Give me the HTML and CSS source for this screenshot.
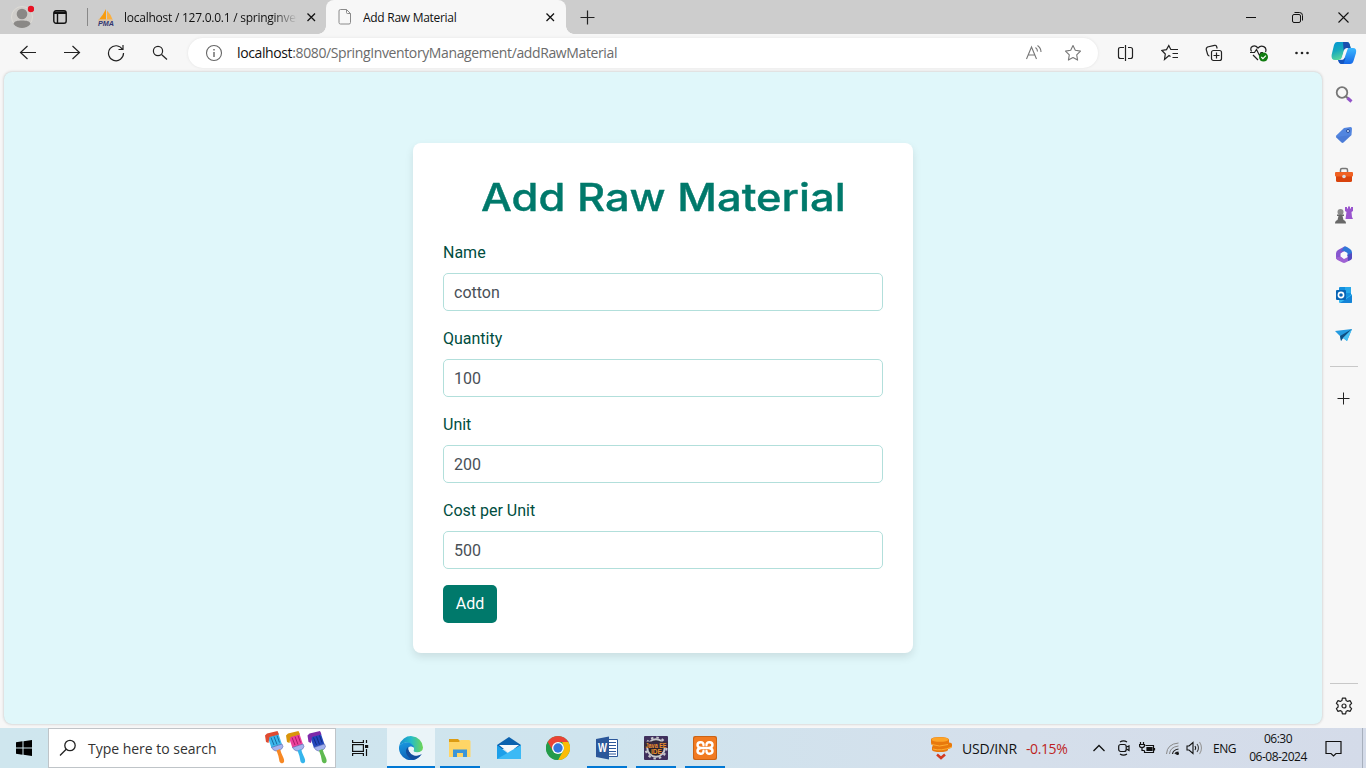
FILE: index.html
```html
<!DOCTYPE html>
<html lang="en">
<head>
<meta charset="utf-8">
<title>Add Raw Material</title>
<link rel="stylesheet" href="styles.css">
</head>
<body>
<div class="window">
  <header class="tabs">
    <div class="avatar"><svg width="24" height="30" viewBox="0 0 24 30"><circle cx="12" cy="17" r="10.500" fill="#cfcdca" stroke="#dddbd6"/><circle cx="12" cy="14" r="5.300" fill="#8a8886"/><path d="M3.500 24c.5-3 4-3.500 8.500-3.500s8 .5 8.500 3.500a11 11 0 0 1-17 0z" fill="#8a8886"/><circle cx="21" cy="9" r="3.200" fill="#e81123"/></svg></div>
    <div class="workspace"><svg width="14" height="14" viewBox="0 0 14 14" fill="none" stroke="#111" stroke-width="1.400"><rect x=".8" y=".8" width="12.400" height="12.400" rx="2.200"/><path d="M1 3.300h12M4.500 4v9"/><path d="M1 2.500h12" stroke-width="2"/></svg></div>
    <div class="tab idle">
      <svg width="18" height="18" viewBox="0 0 18 18"><path d="M9 1v10.500H2Q6 7 9 1z" fill="#f89c0e"/><path d="M10 2.500q4 4 5.500 9H10z" fill="#fbb040"/><path d="M1 12h15" stroke="#e8b87a"/><text x="1" y="17.500" class="pma" textLength="16" lengthAdjust="spacingAndGlyphs">PMA</text></svg>
      <span class="tab-title faded">localhost / 127.0.0.1 / springinver</span>
      <svg class="close" width="10" height="10" viewBox="0 0 10 10"><path d="M1.500 1.500l7.500 7.500M9 1.500L1.500 9" stroke="#111" stroke-width="1.300"/></svg>
    </div>
    <div class="tab active">
      <svg width="14" height="18" viewBox="0 0 14 18" fill="none" stroke="#8a8a8a"><path d="M2.500 1.500h6l4 4v9q0 1.500-1.500 1.500h-8.500q-1.500 0-1.500-1.500v-11.500q0-1.500 1.500-1.500zM8.500 1.500v3q0 1 1 1h3"/></svg>
      <span class="tab-title">Add Raw Material</span>
      <svg class="close" width="10" height="10" viewBox="0 0 10 10"><path d="M1.500 1.500l7.500 7.500M9 1.500L1.500 9" stroke="#111" stroke-width="1.300"/></svg>
    </div>
    <div class="new-tab"><svg width="15" height="15" viewBox="0 0 15 15"><path d="M7.500 0.500v14M.5 7.500h14" stroke="#222" stroke-width="1.200"/></svg></div>
    <div class="controls">
      <span><svg width="10" height="10" viewBox="0 0 10 10"><path d="M0 5.500h10" stroke="#111"/></svg></span>
      <span><svg width="11" height="11" viewBox="0 0 11 11" fill="none" stroke="#111"><rect x=".5" y="2.500" width="8" height="8" rx="1.500"/><path d="M2.500 .5h5q3 0 3 3v5"/></svg></span>
      <span><svg width="11" height="11" viewBox="0 0 11 11"><path d="M.5 .5l10 10M10.500 .5l-10 10" stroke="#111" stroke-width="1.100"/></svg></span>
    </div>
  </header>

  <nav class="toolbar">
    <div class="nav-buttons">
      <span><svg width="18" height="18" viewBox="0 0 18 18"><path d="M17 8.500H1.500M8.500 2L1.500 8.500l7 6.500"/></svg></span>
      <span><svg width="18" height="18" viewBox="0 0 18 18"><path d="M1 8.500h15.500M9.500 2l7 6.500-7 6.500"/></svg></span>
      <span><svg width="18" height="18" viewBox="0 0 18 18"><path d="M15.500 5.500A7.500 7.500 0 1 0 16.500 9M16 1v4.500h-4.500"/></svg></span>
      <span><svg width="18" height="18" viewBox="0 0 18 18"><circle cx="7" cy="7" r="4.600"/><path d="M10.500 10.500L16 15.500"/></svg></span>
    </div>
    <div class="omnibox">
      <svg width="18" height="18" viewBox="0 0 18 18" fill="none" stroke="#666"><circle cx="9" cy="9" r="7.500" stroke-width="1.100"/><path d="M9 8v5M9 5v1.500" stroke-width="1.400"/></svg>
      <span class="url"><b>localhost</b>:8080/SpringInventoryManagement/addRawMaterial</span>
      <svg class="read" width="18" height="18" viewBox="0 0 18 18" fill="none" stroke="#777" stroke-width="1.100"><path d="M1.500 15L6.500 3l5 12M3.200 11h6.600M10.500 3.500q2 1.500 2 4M12.500 1.500q3.500 2.500 3.500 6.500"/></svg>
      <svg width="18" height="18" viewBox="0 0 18 18" fill="none" stroke="#777" stroke-width="1.100"><path d="M9 1.500l2.300 4.800 5.200.8-3.800 3.700.9 5.300L9 13.600l-4.600 2.500.9-5.300L1.500 7.100l5.200-.8z" stroke-linejoin="round"/></svg>
    </div>
    <div class="nav-buttons actions">
      <span><svg width="18" height="18" viewBox="0 0 18 18"><path d="M6 3.500H3.500Q1.500 3.500 1.500 5.500v7q0 2 2 2H6M11 3.500h2.500q2 0 2 2v7q0 2-2 2H11M8.500 1v16M5.500 3.500h1.500M5.500 14.500h1.500"/></svg></span>
      <span><svg width="18" height="18" viewBox="0 0 18 18"><path d="M9.500 12.500l-1.500-1-4.500 4 .8-5.500L.9 6.500l4.600-.9L7.800 1.500l2 4H17M11.500 9.500H17M11.500 13.500H17"/></svg></span>
      <span><svg width="18" height="18" viewBox="0 0 18 18"><rect x="6.500" y="6.500" width="10" height="10" rx="2"/><path d="M11.500 8.500v6M8.500 11.500h6M4.500 12Q3 12 2.500 10L1.200 5.500Q1 4 2.500 3L9.500 1.300q1.500-.3 2 1l.7 2.200"/></svg></span>
      <span class="health"><svg width="20" height="18" viewBox="0 0 20 18"><path d="M2.500 7.500C0 2.500 5.500 0 9 4c3.500-4 9.500-1 7.500 4M1 8.500h4.500l2-3 3 6 1.500-3h2M4 11l5 5"/><circle cx="14.500" cy="13" r="4.500" fill="#107c10" stroke="none"/><path d="M12.300 13l1.600 1.600 3-3" stroke="#fff"/></svg></span>
      <span><svg width="16" height="18" viewBox="0 0 16 18"><g fill="#222" stroke="none"><circle cx="2.500" cy="9" r="1.300"/><circle cx="8" cy="9" r="1.300"/><circle cx="13.500" cy="9" r="1.300"/></g></svg></span>
      <span class="copilot"><svg width="26" height="24" viewBox="0 0 26 24"><defs><linearGradient id="ca" x1="0" y1="0" x2=".4" y2="1"><stop offset="0" stop-color="#0094d4"/><stop offset=".5" stop-color="#16a9bd"/><stop offset="1" stop-color="#5bd99a"/></linearGradient><linearGradient id="cb" x1="0" y1="0" x2="0" y2="1"><stop offset="0" stop-color="#3bb8ff"/><stop offset="1" stop-color="#1668e8"/></linearGradient></defs><path d="M6 1h10q2 0 2.600 2l1 4h-4q-2 0-2.600 2l-2 7q-.8 3-3 3H4q-4 0-3.400-5L3 4Q3.800 1 6 1z" fill="url(#ca)"/><path d="M12 1h4q2 0 2.600 2l1.400 5h-5q-1.600 0-2.400 1.600z" fill="#1a4fae"/><path d="M20 7h2q4 0 3 5l-2.500 8q-.8 3-3.500 3h-8q-2.600 0-3.500-4H9q1.800 0 2.500-2L14 9q.6-2 2.600-2z" fill="url(#cb)"/><path d="M7 19q.9 4 3.500 4h2l2-6-3-.3Q10.800 19 9 19z" fill="#1455c0"/><path d="M13.500 8.500q.7-1.500 2.500-1.500h1l-3.500 10q-1 2-3 2H9q1.500 0 2-2z" fill="#f7f7f7"/></svg></span>
    </div>
  </nav>

  <div class="body">
    <main class="page">
      <form class="card">
        <h1><span>Add Raw Material</span></h1>
        <label for="name">Name</label><input id="name" value="cotton">
        <label for="quantity">Quantity</label><input id="quantity" value="100">
        <label for="unit">Unit</label><input id="unit" value="200">
        <label for="cost">Cost per Unit</label><input id="cost" value="500">
        <button type="button">Add</button>
      </form>
    </main>
    <aside class="sidebar">
      <span><svg width="18" height="18" viewBox="0 0 18 18" fill="none"><circle cx="7" cy="6.500" r="5.300" stroke="#777" stroke-width="1.800"/><path d="M10.800 10.300l2 2" stroke="#777" stroke-width="2"/><path d="M12.500 12l4 3.500" stroke="#9254c8" stroke-width="3"/></svg></span>
      <span><svg width="18" height="18" viewBox="0 0 18 18"><path d="M9 2l6.500-1q1.500 0 1.500 1.500L16.500 9 8.500 16.500q-1 .8-2 0L1.300 11.500q-.8-1 0-2z" fill="#5285df"/><path d="M1 11l6 5.500q.7.200 1.500-.5L16.500 9" fill="#3a68c5" opacity=".3"/><circle cx="13" cy="5" r="1.500" fill="#d8e7ff" stroke="#244b9b"/></svg></span>
      <span><svg width="18" height="16" viewBox="0 0 18 16"><path d="M5.500 5V3q0-1.500 1.500-1.500h4q1.500 0 1.500 1.500v2" fill="none" stroke="#777" stroke-width="1.500"/><rect x="1" y="5" width="16" height="10" rx="1.500" fill="#d8430d"/><rect x="0" y="5" width="18" height="4.500" rx="1" fill="#f06123"/><circle cx="9" cy="9.500" r="1.800" fill="#d7dce0"/></svg></span>
      <span><svg width="18" height="18" viewBox="0 0 18 18"><path d="M10 1h2v1.500h1V.5h2v2h1V1h2v4l-1.500 1 .5 5 1 2h-7.500l1-7L10 5z" fill="#9a55ce"/><circle cx="5.500" cy="6" r="3" fill="#8b8b8b"/><path d="M2 8.500h7V10H7.500l1 4q2.500.5 2.500 3.500H0Q0 14.500 2.500 14l1-4H2z" fill="#686868"/></svg></span>
      <span><svg width="18" height="18" viewBox="0 0 18 18"><path d="M9 .7L3 4Q1 5 1 7.500v5L5.500 15V7.500L12 4V1.500Q10.500 0 9 .7z" fill="#8757cf"/><path d="M9 .7q1.500-.6 3 .3L15 3q2 1.200 2 3.500V12l-4.500-2V7L8 4.500 6 5.500z" fill="#2f78d8"/><path d="M1 11.500l5-1 3 2.500 4-2 4-4v4.500q0 1.500-1.500 2.500l-5 2.500q-1.500.9-3 0L2.500 14Q1 13 1 11.500z" fill="#9f62d4"/><path d="M12.500 9L17 7v4.500q0 1.500-1.500 2.500L13 15z" fill="#534ac0"/><path d="M6 7.200l3-1.700 3 1.700v3.600l-3 1.700-3-1.700z" fill="#fafafa"/></svg></span>
      <span><svg width="18" height="18" viewBox="0 0 18 18"><rect x="4" y="1" width="12" height="11" rx="1" fill="#1490df"/><path d="M10 1h6v6h-6z" fill="#28a8ea"/><path d="M4 9l6 4 7-5v8q0 1-1 1H5q-1 0-1-1z" fill="#35b8f1"/><path d="M5 17l12-8v7q0 1-1 1z" fill="#1483d6"/><rect x="1" y="4" width="10" height="10" rx="1" fill="#0864b5"/><circle cx="6" cy="9" r="2.600" fill="none" stroke="#fff" stroke-width="1.600"/></svg></span>
      <span><svg width="18" height="16" viewBox="0 0 18 16"><path d="M0 4l17-2-5 12-4-3-2 3-1-5z" fill="#259be0"/><path d="M17 2L5 9l1 5 2-3z" fill="#105083"/><path d="M17 2l-9 9 4 3z" fill="#48c0f3"/></svg></span>
      <hr>
      <span class="add"><svg width="13" height="13" viewBox="0 0 13 13"><path d="M6.500 .5v12M.5 6.500h12" stroke="#222"/></svg></span>
      <hr class="low">
      <span class="gear"><svg width="18" height="18" viewBox="0 0 18 18" fill="none" stroke="#222" stroke-width="1.200"><path d="M7.400 1.200h3.200l.5 2.300 1.600.9 2.300-.8 1.600 2.700L14.900 8v2l1.700 1.700-1.600 2.700-2.300-.8-1.600.9-.5 2.300H7.400l-.5-2.300-1.600-.9-2.300.8-1.600-2.700L3.100 10V8L1.400 6.300 3 3.600l2.300.8 1.600-.9z" stroke-linejoin="round"/><circle cx="9" cy="9" r="2"/></svg></span>
    </aside>
  </div>

  <footer class="taskbar">
    <div class="start"><svg width="16" height="16" viewBox="0 0 16 16"><path d="M0 2.200L6.500 1.300v6.200H0zM7.500 1.200L16 0v7.500H7.500zM0 8.500h6.500v6.200L0 13.800zM7.500 8.500H16V16l-8.500-1.200z"/></svg></div>
    <div class="search">
      <svg width="18" height="18" viewBox="0 0 18 18" fill="none" stroke="#222" stroke-width="1.300"><circle cx="11" cy="6.500" r="5.200"/><path d="M7.200 10.200L1 16.500"/></svg>
      <span>Type here to search</span>
      <svg class="brushes" width="64" height="34" viewBox="0 0 64 34">
        <defs>
          <path id="hair" d="M2 4l11-2.500 4 12L6.500 17z"/>
          <path id="band" d="M6.500 16.500L17 13l1 2.500q-1 3-3.500 4l-3.500.5q-3-.5-4.500-3.500z" fill="#a3b1ee" stroke="#5767ae" stroke-width=".6"/>
          <path id="drip" d="M0 4.500l2-2L12.500 0 14 3.500 4.500 6l-1 6-2.500-1z"/>
          <path id="grip" d="M11.500 19.500l3.500-1.500q1 4 3.500 9 1.500 4-.5 5-2.500 1-3.500-1.500-.5-5-3-11z"/>
          <path id="streak" d="M6 6.500l3 7.500M9 5.500l3 8M12 4.500l2.500 7"/>
        </defs>
        <g><use href="#hair" fill="#3cb7ec"/><use href="#band"/><use href="#drip" fill="#df4b31"/><use href="#grip" fill="#f78824"/><use href="#streak" stroke="#176c9e"/></g>
        <g transform="translate(21 0)"><use href="#hair" fill="#ed419c"/><use href="#band"/><use href="#drip" fill="#d9950b"/><use href="#grip" fill="#35b5ec"/><use href="#streak" stroke="#a81969"/></g>
        <g transform="translate(42.500 0)"><use href="#hair" fill="#2347bd"/><use href="#band"/><use href="#drip" fill="#7e2aaa"/><use href="#grip" fill="#5fb950"/><use href="#streak" stroke="#122d83"/></g>
      </svg>
    </div>
    <div class="taskview"><svg width="17" height="16" viewBox="0 0 17 16" fill="none" stroke="#111" stroke-width="1.200"><path d="M.6 0v2.500h10.800V0M.6 16v-2.500h10.800V16M14.500 0v3M14.500 9v7"/><rect x=".6" y="4.600" width="10.800" height="6.800"/><path d="M13 5h3.200v3H13z" fill="#111" stroke="none"/></svg></div>
    <div class="apps">
      <span class="current"><svg width="24" height="24" viewBox="0 0 24 24"><defs><linearGradient id="ea"><stop offset="0" stop-color="#168bd0"/><stop offset=".5" stop-color="#25bcc8"/><stop offset="1" stop-color="#70d653"/></linearGradient><linearGradient id="eb" x1="0" y1="0" x2=".4" y2="1"><stop offset="0" stop-color="#1a9be2"/><stop offset="1" stop-color="#0c5fb5"/></linearGradient></defs><path d="M.3 9.500A12 12 0 0 1 24 11.500q-.3 4.700-6 4.700-4.500 0-3.400-2.200Q16 12 13 9 7 4 .3 9.500z" fill="url(#ea)"/><path d="M.3 9.500Q6 4 12 7.500q3 2 3 4.500-1.500-2-4-1.500-3 1-2.500 4.500 1 4.500 5.500 5.500 4.500.8 8.500-2.500A12 12 0 0 1 .3 9.500z" fill="url(#eb)"/><path d="M9 11q-3.500 3-1 8 2 3.500 6 4.800 5.500-.6 8.700-5.800-4 2-8 .5-4.500-2-5.200-5z" fill="#114d9c"/><path d="M11.500 11q-2.500 1-1.500 4 1.500 3.500 5 4.500 4 1 7.500-1.500.8-1-.3-.7-3 1-5.700 0-3-1.300-1.700-3.500.7-2-1-2.800-1-.5-2.300 0z" fill="#eaf4f8"/></svg></span>
      <span class="open"><svg width="22" height="20" viewBox="0 0 22 20"><path d="M0 1h9l2 2h9v3H0z" fill="#dc9c13"/><path d="M0 4h10l1.500-2H20q1.500 0 1.500 1.500V19H0z" fill="#ffd566"/><path d="M4 19v-7.500h14V19h-4v-4H8v4z" fill="#3b96d8"/></svg></span>
      <span><svg width="24" height="24" viewBox="0 0 24 24"><path d="M0 9L12 1l12 8v4H0z" fill="#0b61ae"/><path d="M2 9h20L12 17z" fill="#f6f8fb"/><path d="M0 9l18 14H0z" fill="#1c9fe9"/><path d="M0 23l24-14v14z" fill="#3cb9f5"/></svg></span>
      <span><svg width="24" height="24" viewBox="0 0 24 24"><circle cx="12" cy="12" r="12" fill="#34a853"/><path d="M12 0a12 12 0 0 1 10.400 6H12L6.800 15 1.600 6A12 12 0 0 1 12 0z" fill="#ea4335"/><path d="M22.400 6A12 12 0 0 1 12 24l5.200-9a6 6 0 0 0 0-6l-1-3z" fill="#fbbc05"/><path d="M1.600 6l5.200 9q2 3 5.200 3h3l-3 6A12 12 0 0 1 1.600 6z" fill="#249b4a"/><circle cx="12" cy="12" r="6" fill="#fff"/><circle cx="12" cy="12" r="4.700" fill="#3376dd"/></svg></span>
      <span class="open"><svg width="24" height="24" viewBox="0 0 24 24"><path d="M12 3.500h10.500v17H12z" fill="#fff" stroke="#2b579a"/><path d="M14 6.500h7M14 9.500h7M14 12.500h7M14 15.500h7M14 18h7" stroke="#2b579a"/><path d="M1 3l13-2.500v23L1 21z" fill="#2b579a"/><text x="3" y="16" class="word" textLength="9" lengthAdjust="spacingAndGlyphs">W</text></svg></span>
      <span class="open"><svg width="24" height="24" viewBox="0 0 24 24"><rect width="24" height="24" rx="1" fill="#40305d"/><circle cx="12" cy="12" r="8.700" fill="#272330" stroke="#c7c7cc" stroke-width="2"/><circle cx="12" cy="12" r="10.500" fill="none" stroke="#c7c7cc" stroke-width="2" stroke-dasharray="2.500 3"/><path d="M0 5.500h24V12H0z" fill="#382b41"/><text x="1.500" y="11.500" class="ide" textLength="21" lengthAdjust="spacingAndGlyphs">Java EE</text><text x="7" y="18" class="ide" textLength="11" lengthAdjust="spacingAndGlyphs">IDE</text></svg></span>
      <span class="open"><svg width="24" height="24" viewBox="0 0 24 24"><rect width="24" height="24" rx="2" fill="#cb6315"/><rect x="1" y="1" width="22" height="22" rx="2" fill="#f17a21"/><path d="M8 12h8M8 12Q4.500 11.500 4.500 9T7.500 6.300 10.500 9M8 12q-3.500.5-3.500 3t3 2.700 3-2.700M16 12q3.500-.5 3.500-3t-3-2.700T13.500 9M16 12q3.500.5 3.500 3t-3 2.700-3-2.700" fill="none" stroke="#fff" stroke-width="2.400" stroke-linejoin="round" stroke-linecap="round"/></svg></span>
    </div>
    <div class="tray">
      <svg class="coins" width="23" height="24" viewBox="0 0 23 24"><path d="M1 3q1-2 9-2t9 2.500v3q3 0 3 2v2q-1 2-4 2.500v1q-1 2-8 2t-8-2v-3l1-1.500Q1 9 1 7z" fill="#e8790c"/><ellipse cx="10" cy="3.500" rx="8.500" ry="2.300" fill="#fda427"/><path d="M2 8.500q7 3 16 0M3 13q8 2.500 19-2" stroke="#ffad32" fill="none"/><path d="M7 18.500l4 3.500 4-3.500" stroke="#d33a20" stroke-width="2.500" fill="none"/></svg>
      <span class="pair">USD/INR</span><span class="change">-0.15%</span>
      <svg class="chevron" width="12" height="8" viewBox="0 0 12 8" fill="none" stroke="#111" stroke-width="1.300"><path d="M.5 7L6 1.500 11.500 7"/></svg>
      <svg class="meet" width="12" height="18" viewBox="0 0 12 18" fill="none" stroke="#111" stroke-width="1.200"><rect x=".7" y="5.500" width="7.500" height="7" rx="2"/><path d="M8.500 8l2.500-1v4.500L8.500 10M2 3Q5.500.800 9 3M2 15q3.500 2.200 7 0"/></svg>
      <svg class="battery" width="17" height="14" viewBox="0 0 17 14" fill="none" stroke="#111" stroke-width="1.200"><path d="M6.500 4.500h8v7h-9v-2"/><path d="M8 6.500h5v3H8z" fill="#111"/><path d="M15.500 7v2.500M1.500 1v2M4.500 1v2M.5 3.500h5v1q0 2-2.500 2t-2.500-2zM3 6.500v3h2.500"/></svg>
      <svg class="wifi" width="13" height="13" viewBox="0 0 13 13" fill="none" stroke="#888"><path d="M.5 12Q1 2 12.500 1M3.500 12Q4 5 12.500 4"/><path d="M6.500 12Q7 8 12.500 7M9 12q.5-2 3.500-2" stroke="#222" stroke-width="1.200"/><circle cx="11.500" cy="11.500" r="1.500" fill="#111" stroke="none"/></svg>
      <svg class="volume" width="18" height="14" viewBox="0 0 18 14" fill="none" stroke="#111" stroke-width="1.100"><path d="M1 5h2l4-3.500v11L3 9H1z"/><path d="M9 5q1.500 2 0 4"/><path d="M11 3q3 4 0 8" stroke="#444"/><path d="M13.500 1q4 6 0 12" stroke="#999"/></svg>
      <span class="lang">ENG</span>
      <div class="clock"><span>06:30</span><span>06-08-2024</span></div>
      <svg class="note" width="18" height="17" viewBox="0 0 18 17" fill="none" stroke="#111" stroke-width="1.200"><path d="M1 1.500h15v12h-5l-2.500 2.500L6 13.500H1z"/></svg>
      <i class="peek"></i>
    </div>
  </footer>
</div>
</body>
</html>
```

FILE: styles.css
```css
* { box-sizing: border-box; }
body { margin: 0; overflow: hidden; font-family: "Open Sans", "Noto Sans", sans-serif; color: #111; }
svg { display: block; flex: none; }
.window { width: 1366px; height: 768px; display: flex; flex-direction: column; background: #f7f7f7; }

.tabs { height: 34px; flex: none; display: flex; background: #cdcdcd; font-size: 12px; }
.avatar { width: 41px; padding-left: 10px; }
.workspace { width: 47px; border-right: 1px solid #888; height: 18px; margin-top: 8px; padding: 2px 0 0 12px; }
.tab { display: flex; align-items: center; white-space: nowrap; }
.tab.idle { width: 238px; padding-left: 9px; background: radial-gradient(circle at 0 0, #cdcdcd 7.5px, #f7f7f7 8px) 230px 26px / 8px 8px no-repeat; }
.tab-title { flex: none; overflow: hidden; letter-spacing: -0.28px; }
.idle .tab-title { width: 173px; margin-left: 9px; letter-spacing: -0.25px; }
.faded { -webkit-mask-image: linear-gradient(to right, #000 86%, transparent); mask-image: linear-gradient(to right, #000 86%, transparent); }
.idle .close { margin-left: 9px; }
.tab.active { width: 240px; padding-left: 12px; background: #f7f7f7; border-radius: 8px 8px 0 0; }
.active .tab-title { margin-left: 11px; width: 182px; }
.pma { font: italic bold 6.5px "Liberation Sans", sans-serif; fill: #34356f; }
.new-tab { width: 43px; display: grid; place-items: center; background: radial-gradient(circle at 8px 0, #cdcdcd 7.5px, #f7f7f7 8px) 0 26px / 8px 8px no-repeat; }
.controls { margin-left: auto; display: flex; }
.controls span { width: 46px; display: grid; place-items: center; }

.toolbar { height: 37px; flex: none; display: flex; align-items: center; padding-left: 6px; }
.nav-buttons { display: flex; width: 182px; }
.nav-buttons span { width: 44px; height: 37px; display: grid; place-items: center; }
.nav-buttons svg { fill: none; stroke: #222; stroke-width: 1.2; }
.omnibox { width: 910px; height: 30px; background: #fff; border-radius: 15px; box-shadow: 0 0 3px #e2e2e2; display: flex; align-items: center; padding: 0 16px 0 17px; }
.url { margin-left: 14px; font-size: 14px; color: #6b6b6b; letter-spacing: -0.38px; white-space: nowrap; }
.url b { color: #111; font-weight: 400; }
.read { margin: 0 21px 0 auto; }
.actions { margin-left: 6px; width: auto; }
.actions .health { padding-left: 2px; }
.actions .copilot { width: 40px; }
.copilot svg { stroke: none; }

.body { flex: 1; display: flex; padding-left: 4px; }
.page { width: 1318px; height: 652px; margin-top: 1px; background: #e0f7fa; border-radius: 8px; box-shadow: 0 0 3px #bbb; padding-top: 71px; }
.card { width: 500px; height: 510px; margin: 0 auto; padding: 30px; background: #fff; border-radius: 8px; box-shadow: 0 4px 8px rgba(0, 0, 0, .1); font: 16px/24px Roboto, sans-serif; }
h1 { margin: 0 0 20px; height: 48px; font: 500 38.5px/48px Inter, sans-serif; color: #00796b; text-align: center; white-space: nowrap; }
h1 span { display: inline-block; transform: scaleX(1.13); -webkit-text-stroke: 0.4px #00796b; }
label { display: block; color: #004d40; margin-bottom: 8px; }
input { display: block; width: 440px; height: 38px; margin-bottom: 16px; border: 1px solid #b2dfdb; border-radius: 5px; padding: 0 10px; font: 16px Roboto, sans-serif; color: #495057; background: #fff; }
button { display: block; width: 54px; height: 38px; border: 0; border-radius: 5px; background: #00796b; color: #fff; font: 16px Roboto, sans-serif; padding: 0 0 1px; }

.sidebar { width: 44px; display: flex; flex-direction: column; align-items: center; padding-top: 3px; }
.sidebar span { height: 40px; flex: none; display: grid; place-items: center; padding-top: 1px; }
hr { width: 28px; height: 1px; border: 0; margin: 12px 0; background: #c8c8c8; flex: none; }
.sidebar .add { height: 39px; padding: 0 1px 0 0; }
.sidebar .low { margin: auto 0 2px; }
.sidebar .gear { height: 42px; padding-bottom: 4px; }

.taskbar { height: 40px; flex: none; display: flex; background: linear-gradient(90deg, #cfe6ee 0%, #cfe4ee 45%, #d5dfeb 75%, #d4dbe9 100%); }
.start { width: 48px; display: grid; place-items: center; }
.search { width: 288px; background: #fff; border: 1px solid #bfc4c8; display: flex; align-items: center; padding-left: 10px; font-size: 14px; color: #333; white-space: nowrap; }
.search span { margin-left: 11px; width: 177px; letter-spacing: -0.02px; }
.taskview { width: 51px; padding-left: 16px; display: flex; align-items: center; }
.apps { display: flex; }
.apps span { width: 49px; height: 40px; display: grid; place-items: center; padding-right: 1px; }
.current { background: linear-gradient(#0078d4, #0078d4) 0 38px / 48px 2px no-repeat, linear-gradient(#eaf4f8, #eaf4f8) 0 0 / 48px 38px no-repeat; }
.open { background: linear-gradient(#0078d4, #0078d4) 4px 38px / 40px 2px no-repeat; }
.word { font: bold 12px "Liberation Sans", sans-serif; fill: #fff; }
.ide { font: bold 6.5px "Liberation Sans", sans-serif; fill: #ef922d; }
.tray { margin-left: auto; width: 436px; display: flex; align-items: center; font-size: 14px; white-space: nowrap; }
.tray > * { flex: none; }
.pair { width: 55px; margin-left: 9px; letter-spacing: -0.2px; }
.change { width: 67px; margin-left: 9px; color: #bd1f1f; letter-spacing: -0.4px; }
.meet { margin-left: 13px; }
.battery { margin-left: 9px; }
.wifi { margin-left: 10px; }
.volume { margin-left: 7px; }
.lang { width: 24px; margin-left: 9px; font-size: 12px; letter-spacing: -0.5px; }
.clock { width: 62px; margin-left: 10px; display: flex; flex-direction: column; align-items: center; font-size: 12px; line-height: 18px; letter-spacing: -0.5px; }
.note { margin-left: 16px; }
.peek { width: 1px; height: 40px; background: #a8b0bd; margin-left: 19px; }
```
